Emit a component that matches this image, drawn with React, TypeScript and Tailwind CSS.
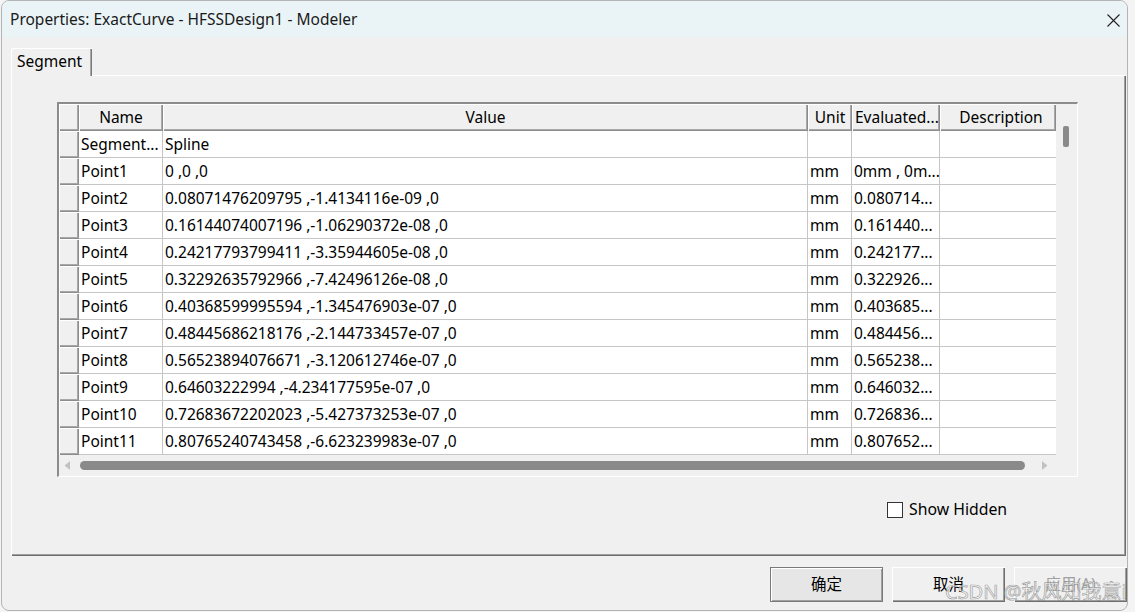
import React from "react";

const rows: [string, string, string, string][] = [
  ["Segment...", "Spline", "", ""],
  ["Point1", "0 ,0 ,0", "mm", "0mm , 0m..."],
  ["Point2", "0.08071476209795 ,-1.4134116e-09 ,0", "mm", "0.080714..."],
  ["Point3", "0.16144074007196 ,-1.06290372e-08 ,0", "mm", "0.161440..."],
  ["Point4", "0.24217793799411 ,-3.35944605e-08 ,0", "mm", "0.242177..."],
  ["Point5", "0.32292635792966 ,-7.42496126e-08 ,0", "mm", "0.322926..."],
  ["Point6", "0.40368599995594 ,-1.345476903e-07 ,0", "mm", "0.403685..."],
  ["Point7", "0.48445686218176 ,-2.144733457e-07 ,0", "mm", "0.484456..."],
  ["Point8", "0.56523894076671 ,-3.120612746e-07 ,0", "mm", "0.565238..."],
  ["Point9", "0.64603222994 ,-4.234177595e-07 ,0", "mm", "0.646032..."],
  ["Point10", "0.72683672202023 ,-5.427373253e-07 ,0", "mm", "0.726836..."],
  ["Point11", "0.80765240743458 ,-6.623239983e-07 ,0", "mm", "0.807652..."],
];

const hdr =
  "bg-[#f0f0f0] shadow-[inset_1px_1px_0_#ffffff,inset_-1px_-1px_0_#8c8c8c,inset_-2px_-2px_0_#a8a8a8] overflow-hidden whitespace-nowrap flex items-center";
const cell =
  "bg-white border-r border-b border-[#c6c6c6] overflow-hidden whitespace-nowrap flex items-center pl-[2px] pt-[2px]";

export default function App() {
  return (
    <div className="relative w-[1135px] h-[612px] bg-[#f4f4f4] pl-[1px] font-['Noto_Sans','Noto_Sans_CJK_SC',sans-serif] text-[15.5px] text-black leading-none overflow-hidden">
      <div className="w-[1127px] h-[611px] border border-[#b4b4b4] rounded-[8px] overflow-hidden flex flex-col bg-[#f0f0f0]">
        {/* Title bar */}
        <div className="h-[36px] bg-[#eaf4f7] flex items-center pl-[8px] pt-[2px] shrink-0">
          <span className="text-[#1a1a1a]">Properties: ExactCurve - HFSSDesign1 - Modeler</span>
          <svg className="ml-auto mr-[7px]" width="13" height="13" viewBox="0 0 13 13">
            <path d="M0.5 0.5 L12.5 12.5 M12.5 0.5 L0.5 12.5" stroke="#222" strokeWidth="1.1" fill="none" />
          </svg>
        </div>

        {/* Body */}
        <div className="flex flex-col pt-[11px] pl-[9px]">
          {/* Tab */}
          <div className="relative z-10 -mb-[1px] w-[81px] h-[28px] bg-[#f0f0f0] rounded-tl-[2px] shadow-[inset_1px_1px_0_#ffffff,inset_-1px_0_0_#7a7a7a,inset_-2px_0_0_#a8a8a8] flex items-center pl-[6px] pb-[1px]">
            Segment
          </div>
          {/* Panel */}
          <div className="w-[1115px] h-[481px] shadow-[inset_1px_1px_0_#ffffff,inset_-1px_-1px_0_#6e6e6e,inset_-2px_-2px_0_#a0a0a0] flex flex-col">
            {/* Table frame */}
            <div className="ml-[46px] mt-[27px] w-[1021px] h-[375px] border-t-2 border-l-2 border-[#8c8c8c] border-r border-b border-r-white border-b-white flex flex-col">
              <div className="flex">
                <div className="flex flex-col w-[997px]">
                  {/* Header */}
                  <div className="flex h-[27px]">
                    <div className={`${hdr} w-[20px]`} />
                    <div className={`${hdr} w-[84px] justify-center`}>Name</div>
                    <div className={`${hdr} w-[645px] justify-center`}>Value</div>
                    <div className={`${hdr} w-[44px] justify-center`}>Unit</div>
                    <div className={`${hdr} w-[88px] pl-[3px]`}>Evaluated...</div>
                    <div className={`${hdr} w-[116px] justify-center pl-[6px]`}>Description</div>
                  </div>
                  {rows.map((r, i) => (
                    <div key={i} className="flex h-[27px]">
                      <div className={`${hdr} w-[20px]`} />
                      <div className={`${cell} w-[84px]`}>{r[0]}</div>
                      <div className={`${cell} w-[645px]`}>{r[1]}</div>
                      <div className={`${cell} w-[44px]`}>{r[2]}</div>
                      <div className={`${cell} w-[88px]`}>{r[3]}</div>
                      <div className="bg-white border-b border-[#c6c6c6] w-[116px]" />
                    </div>
                  ))}
                </div>
                {/* vertical scrollbar */}
                <div className="w-[21px] bg-[#f0f0f0] flex flex-col">
                  <div className="ml-[7px] mt-[22px] w-[6px] h-[21px] bg-[#8a8a8a] rounded-[2px]" />
                </div>
              </div>
              {/* horizontal scrollbar */}
              <div className="flex h-[22px] bg-[#f0f0f0] items-center">
                <svg className="ml-[5px]" width="7" height="9" viewBox="0 0 7 9">
                  <path d="M6 0 L0.5 4.5 L6 9 Z" fill="#c2c2c2" />
                </svg>
                <div className="ml-[9px] w-[945px] h-[9px] bg-[#8a8a8a] rounded-full" />
                <svg className="ml-[16px]" width="7" height="9" viewBox="0 0 7 9">
                  <path d="M1 0 L6.5 4.5 L1 9 Z" fill="#c2c2c2" />
                </svg>
              </div>
            </div>
            {/* Show Hidden */}
            <div className="flex items-center ml-[876px] mt-[25px]">
              <div className="w-[16px] h-[16px] bg-white border border-[#333333]" />
              <span className="ml-[6px] text-[15.8px]">Show Hidden</span>
            </div>
          </div>
          {/* Buttons */}
          <div className="flex mt-[11px] pl-[759px] gap-[9px]">
            <div className="w-[113px] h-[35px] flex items-center justify-center bg-[#e6e6e6] border border-[#7a7a7a] shadow-[inset_1px_1px_0_#ffffff,inset_-1px_-1px_0_#a0a0a0]">
              确定
            </div>
            <div className="w-[113px] h-[35px] flex items-center justify-center bg-[#f0f0f0] shadow-[inset_1px_1px_0_#ffffff,inset_-1px_-1px_0_#6e6e6e,inset_-2px_-2px_0_#a0a0a0]">
              取消
            </div>
            <div className="w-[113px] h-[35px] flex items-center justify-center bg-[#f0f0f0] text-[#a0a0a0] shadow-[inset_1px_1px_0_#ffffff,inset_-1px_-1px_0_#6e6e6e,inset_-2px_-2px_0_#a0a0a0]">
              应用(A)
            </div>
          </div>
        </div>
      </div>
      {/* watermark */}
      <div className="absolute left-[945px] top-[582px] text-[20px] text-white/60 [-webkit-text-stroke:0.7px_rgba(120,120,120,0.7)] whitespace-nowrap">
        CSDN @秋风知我意i
      </div>
    </div>
  );
}
